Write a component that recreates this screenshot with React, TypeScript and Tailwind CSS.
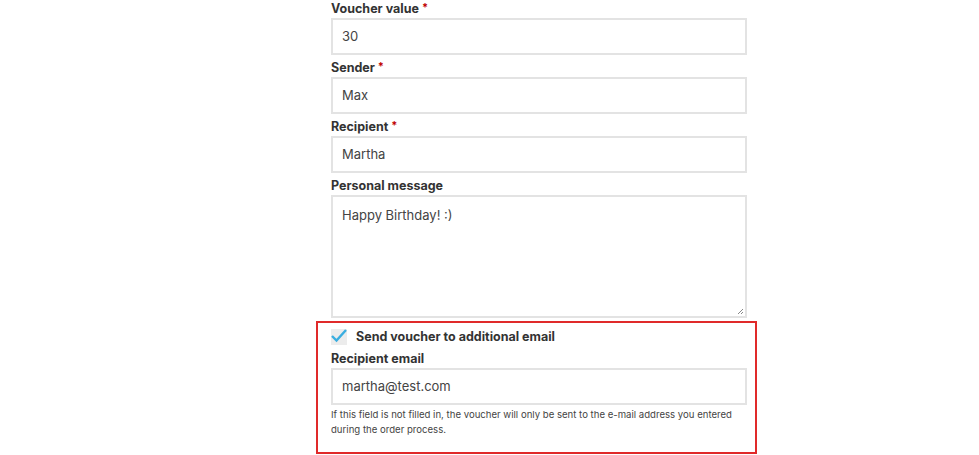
import React from "react";

const font = { fontFamily: "Inter, 'Noto Sans', sans-serif" };

function Label({ text, required }: { text: string; required?: boolean }) {
  return (
    <div className="h-[18px] flex items-center text-[12.5px] font-bold text-[#333333] leading-[18px]">
      <span>{text}</span>
      {required && <span className="ml-[3px] text-[#c00000] text-[11px] -mt-[4px]">*</span>}
    </div>
  );
}

function Input({ value }: { value: string }) {
  return (
    <div className="h-[37px] border-2 border-[#e3e3e3] bg-white flex items-center pl-[9px] text-[13px] text-[#444444]">
      {value}
    </div>
  );
}

export default function App() {
  return (
    <div className="w-[979px] h-[455px] bg-white overflow-hidden" style={font}>
      <div className="ml-[331px] w-[416px] flex flex-col">
        <Label text="Voucher value" required />
        <Input value="30" />
        <div className="h-[4px]" />
        <Label text="Sender" required />
        <Input value="Max" />
        <div className="h-[4px]" />
        <Label text="Recipient" required />
        <Input value="Martha" />
        <div className="h-[4px]" />
        <Label text="Personal message" />
        <div className="relative h-[123px] border-2 border-[#e3e3e3] bg-white pl-[9px] pt-[9px] text-[13px] text-[#444444]">
          Happy Birthday! :)
          <svg className="absolute right-[1px] bottom-[1px]" width="8" height="8" viewBox="0 0 8 8">
            <path d="M7 2 L2 7 M7 5 L5 7" stroke="#888" strokeWidth="1" />
          </svg>
        </div>
        <div className="mt-[3px] -ml-[15px] w-[441px] h-[133px] border-2 border-[#e02a2a] pl-[13px] pr-[8px]">
          <div className="h-[26px] flex items-center mt-[1px]">
            <div className="relative w-[16px] h-[16px] bg-[#ececec]">
              <svg className="absolute -left-[1px] -top-[1px]" width="18" height="16" viewBox="0 0 18 16">
                <path d="M2 8 L6.5 12.5 L16 2" fill="none" stroke="#3aaee0" strokeWidth="2.4" />
              </svg>
            </div>
            <span className="ml-[9px] text-[12.5px] font-bold text-[#333333]">Send voucher to additional email</span>
          </div>
          <Label text="Recipient email" />
          <Input value="martha@test.com" />
          <div className="mt-[2px] text-[9.6px] leading-[15px] text-[#444444]">
            If this field is not filled in, the voucher will only be sent to the e-mail address you entered during the order process.
          </div>
        </div>
      </div>
    </div>
  );
}
